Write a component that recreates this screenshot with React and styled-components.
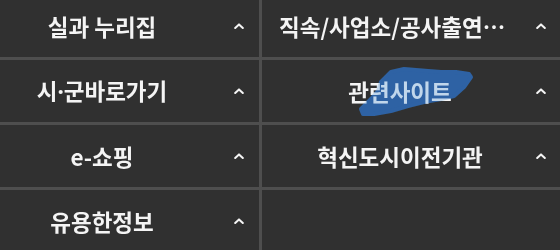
import React from 'react';
import styled, { createGlobalStyle } from 'styled-components';

const GlobalStyle = createGlobalStyle`
  body {
    margin: 0;
    background: #303030;
    overflow: hidden;
  }
`;

const MenuGrid = styled.div`
  display: grid;
  grid-template-columns: 291px 299px;
  grid-auto-rows: 62px;
  gap: 3px;
  background: #4e4e4e;
  margin: -5px 0 0 -32px;
  width: max-content;
  font-family: 'Noto Sans CJK KR', 'Noto Sans', sans-serif;
`;

const Cell = styled.div`
  position: relative;
  display: flex;
  align-items: center;
  padding-left: 17px;
  background: #303030;
  min-width: 0;
`;

const Label = styled.span`
  position: relative;
  z-index: 1;
  flex: 1;
  min-width: 0;
  text-align: center;
  color: #f4f4f4;
  font-size: 22.5px;
  font-weight: 700;
  line-height: 30px;
  white-space: nowrap;
  overflow: hidden;
  text-overflow: ellipsis;
`;

// the CJK middle dot is full width, the original one is narrow
const Dot = styled.span`
  font-family: 'Noto Sans', sans-serif;
`;

const Caret = styled.span`
  flex: 0 0 40px;
  display: flex;
  justify-content: center;
  align-items: center;
  height: 100%;
`;

const Scribble = styled.svg`
  position: absolute;
  left: 0;
  top: 0;
  width: 100%;
  height: 100%;
  pointer-events: none;
  z-index: ${(p) => (p.$over ? 2 : 0)};
  mix-blend-mode: ${(p) => (p.$over ? 'multiply' : 'normal')};
`;

const scribblePath =
  'M119 22 L129 12 L142 9 L166 11 L179 12 L194 12 L207 14 L209 17 L202 27 L192 36 L179 39 L162 42 L146 46 L129 51 L112 54 L101 54 L99 49 L109 39 L116 31 Z';

const BlueMark = ({ over }) => (
  <Scribble $over={over} viewBox="0 0 299 62" preserveAspectRatio="none">
    <path
      d={scribblePath}
      fill={over ? '#c9e0f6' : '#3a6faa'}
      stroke={over ? '#c9e0f6' : '#3a6faa'}
      strokeWidth="4"
      strokeLinejoin="round"
    />
  </Scribble>
);

const ChevronUp = () => (
  <svg width="10" height="6" viewBox="0 0 10 6">
    <path d="M1.2 5 L5 1.4 L8.8 5" fill="none" stroke="#f4f4f4" strokeWidth="2" strokeLinecap="round" strokeLinejoin="round" />
  </svg>
);

const items = [
  { label: '실과 누리집' },
  { label: '직속/사업소/공사출연기관' },
  { label: <>시<Dot>·</Dot>군바로가기</> },
  { label: '관련사이트', marked: true },
  { label: 'e-쇼핑' },
  { label: '혁신도시이전기관' },
  { label: '유용한정보' },
  null,
];

const App = () => (
  <>
    <GlobalStyle />
    <MenuGrid>
      {items.map((item, i) =>
        item ? (
          <Cell key={i}>
            {item.marked && <BlueMark />}
            <Label>{item.label}</Label>
            {item.marked && <BlueMark over />}
            <Caret>
              <ChevronUp />
            </Caret>
          </Cell>
        ) : (
          <Cell key={i} />
        )
      )}
    </MenuGrid>
  </>
);

export default App;
